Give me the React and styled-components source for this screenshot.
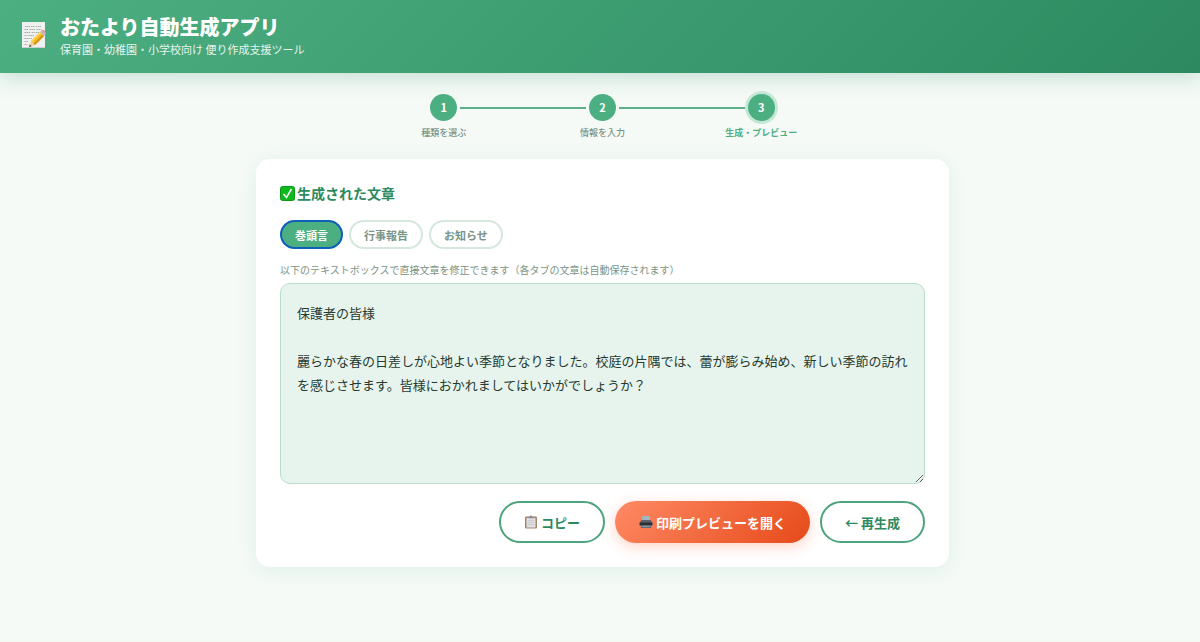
import React, { useState } from "react";
import styled, { createGlobalStyle, css } from "styled-components";

const GlobalStyle = createGlobalStyle`
  * {
    box-sizing: border-box;
  }
  body {
    margin: 0;
    min-height: 100vh;
    background: #f5faf7;
    color: #263a30;
    font-family: "Noto Sans CJK JP", "Noto Sans", sans-serif;
  }
  button,
  textarea {
    font-family: inherit;
  }
`;

const Header = styled.header`
  display: flex;
  align-items: center;
  gap: 12px;
  padding: 13px 20px 15px;
  background: linear-gradient(135deg, #4caf82, #2d8a60);
  box-shadow: 0 4px 20px rgba(45, 138, 96, 0.25);
  color: #fff;
`;
const Title = styled.h1`
  margin: 0;
  font-size: 20px;
  line-height: 27px;
  font-weight: 900;
`;
const Subtitle = styled.p`
  margin: 0;
  font-size: 11px;
  line-height: 18px;
  opacity: 0.88;
`;

const Main = styled.main`
  display: flex;
  flex-direction: column;
  align-items: center;
  padding: 19px 16px 40px 21px;
`;

const Steps = styled.ol`
  display: grid;
  grid-template-columns: repeat(3, 1fr);
  width: 100%;
  max-width: 476px;
  margin: 0;
  padding: 0;
  list-style: none;
`;
const Step = styled.li`
  color: ${(props) => (props.$active ? "#4caf82" : "#7a9485")};
  font-size: 9px;
  font-weight: ${(props) => (props.$active ? 700 : 500)};
  line-height: 16px;
  text-align: center;
`;
const StepTrack = styled.div`
  display: flex;
  align-items: center;
  gap: 3px;
  margin-bottom: 2px;
`;
const StepLine = styled.span`
  flex: 1;
  height: 2px;
  background: ${(props) => (props.$hidden ? "transparent" : "#5fae8a")};
`;
const StepCircle = styled.span`
  width: 27px;
  height: 27px;
  margin: 2px 0;
  border-radius: 50%;
  background: #4caf82;
  box-shadow: ${(props) => (props.$active ? "0 0 0 3px #c5e8d6" : "none")};
  color: #fff;
  font-size: 11px;
  font-weight: 700;
  line-height: 27px;
`;

const Card = styled.section`
  width: 100%;
  max-width: 693px;
  margin-top: 18px;
  padding: 24px;
  border-radius: 14px;
  background: #fff;
  box-shadow: 0 4px 20px rgba(76, 175, 130, 0.12);
`;
const CardTitle = styled.h2`
  display: flex;
  align-items: center;
  gap: 2px;
  margin: 0 0 16px;
  color: #2d8a60;
  font-size: 14px;
  font-weight: 700;
  line-height: 21px;
`;

const Tabs = styled.div`
  display: flex;
  flex-wrap: wrap;
  gap: 6px;
`;
const Tab = styled.button`
  height: 29px;
  padding: 0 13px;
  border: 2px solid #d5e8de;
  border-radius: 15px;
  background: #fff;
  color: #7a9485;
  font-size: 11px;
  font-weight: 700;
  cursor: pointer;

  ${(props) =>
    props.$active &&
    css`
      border-color: #0d5fb8;
      background: #4caf82;
      color: #fff;
    `}
`;

const Hint = styled.label`
  display: block;
  margin: 13px 0 5px;
  color: #7a9485;
  font-size: 10px;
  line-height: 16px;
`;
const TextBox = styled.textarea`
  display: block;
  width: 100%;
  height: 201px;
  padding: 17px 16px;
  border: 1px solid #b9dccb;
  border-radius: 10px;
  outline: none;
  background: #e7f4ed;
  color: #263a30;
  font-size: 13px;
  line-height: 24px;
  resize: vertical;
`;

const Actions = styled.div`
  display: flex;
  flex-wrap: wrap;
  justify-content: flex-end;
  gap: 10px;
  margin-top: 17px;
`;
const ActionButton = styled.button`
  display: flex;
  align-items: center;
  gap: 3px;
  height: 42px;
  padding: 0 23px;
  border: 2px solid #4ca37c;
  border-radius: 21px;
  background: #fff;
  color: #2d8a60;
  font-size: 13px;
  font-weight: 700;
  cursor: pointer;
`;
const PrintButton = styled(ActionButton)`
  padding: 0 24px;
  border: none;
  background: linear-gradient(135deg, #ff8a65, #e64a19);
  box-shadow: 0 4px 14px rgba(255, 112, 67, 0.3);
  color: #fff;
`;

const MemoIcon = () => (
  <svg width="28" height="32" viewBox="0 0 28 32" aria-hidden="true">
    <rect x="2" y="2" width="23" height="26" fill="#eff1f0" />
    <path d="M2 27.500h23" stroke="#c9d2cd" />
    <path
      d="M5 6.500h5m1 0h4m1 0h5M4.500 9.500h4m1 0h6m1 0h5M4.500 12.500h6m1 0h3m1 0h4M4.500 15.500h3m1 0h6M4.500 18.500h5m1 0h2M4.500 21.500h4M4.500 24.500h3"
      stroke="#a7aeab"
      strokeDasharray="1.500 .5"
      fill="none"
    />
    <path d="M9 27l2-6 4 4z" fill="#efcf9b" />
    <path d="M9 27l.8-2.500 1.700 1.700z" fill="#3d3b38" />
    <path d="M11 21l9-9 4 4-9 9z" fill="#f5b81f" />
    <path d="M11 21l9-9 1.300 1.300-9 9z" fill="#ffd75a" />
    <path d="M13.700 23.700l9-9L24 16l-9 9z" fill="#d48e13" />
    <path d="M20 12l1.500-1.500 4 4L24 16z" fill="#b9bfc0" />
    <path d="M21.500 10.500c2-1.700 6 2 4 4z" fill="#ed8f8d" />
  </svg>
);

const CheckIcon = () => (
  <svg width="15" height="15" viewBox="0 0 15 15" aria-hidden="true">
    <rect x=".5" y=".5" width="14" height="14" rx="2" fill="#0fb81c" stroke="#0a9a17" />
    <path d="M3.500 8l3 3.500L11.500 3" fill="none" stroke="#fff" strokeWidth="1.500" />
  </svg>
);

const ClipboardIcon = () => (
  <svg width="14" height="14" viewBox="0 0 14 14" aria-hidden="true">
    <rect x="1" y="1.500" width="12" height="12" rx="1" fill="#a5836c" />
    <rect x="2.500" y="3" width="9" height="9.500" fill="#e0e0e3" />
    <path d="M4 5.500h6M4 7.500h6M4 9.500h6" stroke="#c0c1c6" strokeWidth=".7" />
    <path d="M4.500 3.200V1.800h1.300a1.200 1.200 0 0 1 2.400 0h1.300v1.400z" fill="#858b90" />
  </svg>
);

const PrinterIcon = () => (
  <svg width="14" height="14" viewBox="0 0 14 14" aria-hidden="true">
    <path d="M3.500 1h7l.5 5H3z" fill="#9fb9c4" />
    <path d="M2.500 5h9l1.800 2.500v3.500H.7V7.500z" fill="#5b6167" />
    <path d="M.7 7.500h12.600v2.500H.7z" fill="#2b3036" />
    <path d="M2.500 10h9l.8 3H1.700z" fill="#636b72" />
    <path d="M3.500 11h7l.4 1H3z" fill="#8a949b" />
  </svg>
);

const steps = ["種類を選ぶ", "情報を入力", "生成・プレビュー"];
const tabs = ["巻頭言", "行事報告", "お知らせ"];
const greeting = `保護者の皆様

麗らかな春の日差しが心地よい季節となりました。校庭の片隅では、蕾が膨らみ始め、新しい季節の訪れを感じさせます。皆様におかれましてはいかがでしょうか？`;

const App = () => {
  const [selected, setSelected] = useState(0);
  const [texts, setTexts] = useState([greeting, "", ""]);

  const changeText = (e) => {
    setTexts(texts.map((text, i) => (i === selected ? e.target.value : text)));
  };

  return (
    <>
      <GlobalStyle />
      <Header>
        <MemoIcon />
        <div>
          <Title>おたより自動生成アプリ</Title>
          <Subtitle>保育園・幼稚園・小学校向け 便り作成支援ツール</Subtitle>
        </div>
      </Header>
      <Main lang="ja">
        <Steps>
          {steps.map((label, i) => {
            const active = i === steps.length - 1;
            return (
              <Step key={label} $active={active}>
                <StepTrack>
                  <StepLine $hidden={i === 0} />
                  <StepCircle $active={active}>{i + 1}</StepCircle>
                  <StepLine $hidden={active} />
                </StepTrack>
                {label}
              </Step>
            );
          })}
        </Steps>
        <Card>
          <CardTitle>
            <CheckIcon />
            生成された文章
          </CardTitle>
          <Tabs>
            {tabs.map((tab, i) => (
              <Tab
                key={tab}
                type="button"
                $active={i === selected}
                aria-pressed={i === selected}
                onClick={() => setSelected(i)}
              >
                {tab}
              </Tab>
            ))}
          </Tabs>
          <Hint htmlFor="letter">
            以下のテキストボックスで直接文章を修正できます（各タブの文章は自動保存されます）
          </Hint>
          <TextBox
            id="letter"
            spellCheck={false}
            value={texts[selected]}
            onChange={changeText}
          />
          <Actions>
            <ActionButton type="button">
              <ClipboardIcon />
              コピー
            </ActionButton>
            <PrintButton type="button" onClick={() => window.print()}>
              <PrinterIcon />
              印刷プレビューを開く
            </PrintButton>
            <ActionButton type="button">← 再生成</ActionButton>
          </Actions>
        </Card>
      </Main>
    </>
  );
};

export default App;
